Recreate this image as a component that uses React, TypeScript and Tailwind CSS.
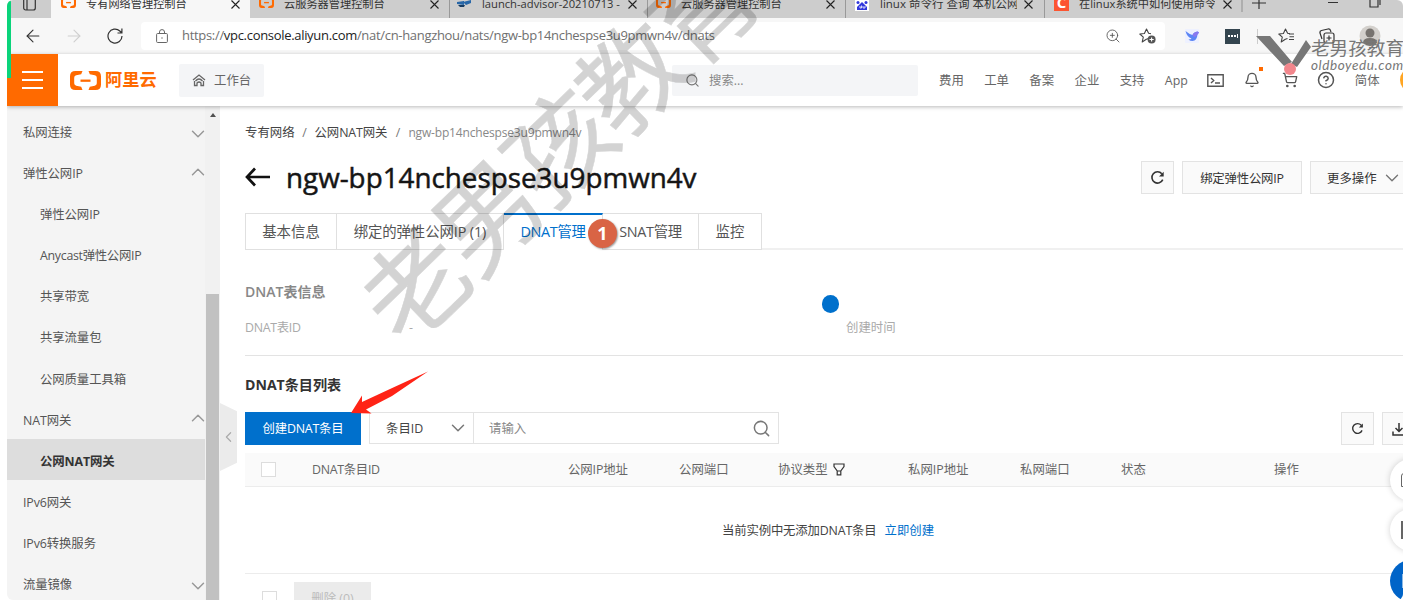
import React from "react";
import {
  ArrowLeft, ArrowRight, Bell, ChevronDown, ChevronLeft, ChevronUp, CircleHelp,
  Search, ShoppingCart, ZoomIn,
} from "lucide-react";

function AliLogo({ className }: { className: string }) {
  return (
    <svg viewBox="0 0 31 20" className={className} fill="#ff6a00" preserveAspectRatio="none">
      <path d="M12.500 0H5.500Q0 0 0 5.500V14.500Q0 20 5.500 20H12.500L11.200 16.600L6.200 15.500Q4.200 15 4.200 13V7Q4.200 5 6.200 4.500L11.200 3.400Z" />
      <path d="M18.500 0H25.500Q31 0 31 5.500V14.500Q31 20 25.500 20H18.500L19.800 16.600L24.800 15.500Q26.800 15 26.800 13V7Q26.800 5 24.800 4.500L19.800 3.400Z" />
      <rect x="10.500" y="9" width="10" height="2.400" />
    </svg>
  );
}

function Refresh({ className }: { className: string }) {
  return (
    <svg viewBox="0 0 16 16" className={className} fill="none" stroke="#333" strokeWidth="1.700">
      <path d="M13.600 10.300A6 6 0 1 1 12.600 4" />
      <path d="M14.600 1.800V6.800H9.600Z" fill="#333" stroke="none" />
    </svg>
  );
}

function Close({ className }: { className: string }) {
  return (
    <svg viewBox="0 0 9 9" className={className} stroke="#222" strokeWidth="1.100">
      <path d="M.5 .5L8.500 8.500M8.500 .5L.5 8.500" />
    </svg>
  );
}

function Tab({ icon, title, className, titleClass }: { icon: React.ReactNode; title: string; className: string; titleClass: string }) {
  return (
    <div className={`flex h-[18px] shrink-0 items-start overflow-hidden ${className}`}>
      <span className="w-[25px] shrink-0">{icon}</span>
      <span className={`-mt-[6px] h-5 shrink-0 overflow-hidden whitespace-nowrap leading-5 text-[#333] ${titleClass}`}>{title}</span>
      <Close className="-mr-px ml-auto size-[9px] shrink-0" />
    </div>
  );
}

function TabStrip() {
  return (
    <div className="flex h-[18px] shrink-0 bg-[#cdcdcd] text-[12px]">
      <div className="flex w-[44px] shrink-0 justify-center rounded-br-md">
        <svg viewBox="0 0 13 14" className="-mt-[3px] h-[14px] w-[13px]" fill="none" stroke="#333" strokeWidth="1.200">
          <rect x=".7" y=".7" width="11.600" height="12.300" rx="2" />
          <path d="M4 1V13" />
        </svg>
      </div>
      <Tab className="w-[199px] bg-[#f7f7f7] pl-[10px] pr-[11px]" titleClass="w-[120px] text-[11.2px]" title="专有网络管理控制台" icon={<AliLogo className="-mt-[3px] h-[11px] w-[15px]" />} />
      <Tab className="w-[199px] rounded-bl-md pl-[9px] pr-[11px]" titleClass="w-[120px] text-[11.2px]" title="云服务器管理控制台" icon={<AliLogo className="-mt-[3px] h-[11px] w-[15px]" />} />
      <Tab
        className="w-[198px] border-l border-[#999] pl-[7px] pr-[11px]"
        titleClass="w-[140px] text-[11.2px]"
        title="launch-advisor-20210713 -"
        icon={
          <svg viewBox="0 0 14 9" className="h-[9px] w-[14px]">
            <path d="M0 4V2L7 1V5ZM6 2L14 0V3L9 5Z" fill="#2867a8" />
            <path d="M1 5H8L7 7H3Z" fill="#163b62" />
          </svg>
        }
      />
      <Tab className="w-[198px] border-l border-[#999] pl-[8px] pr-[11px]" titleClass="w-[120px] text-[11.2px]" title="云服务器管理控制台" icon={<AliLogo className="-mt-[3px] h-[11px] w-[15px]" />} />
      <Tab
        className="w-[199px] border-l border-[#999] pl-[9px] pr-[12px]"
        titleClass="w-[137px] text-[11.5px]"
        title="linux 命令行 查询 本机公网ip"
        icon={
          <svg viewBox="0 0 14 11" className="h-[11px] w-[14px]">
            <path d="M0 0H14V11H0Z" fill="#fff" />
            <g fill="#3036dc"><circle cx="3" cy="2.500" r="1.500" /><circle cx="11" cy="2.500" r="1.500" /><path d="M7 2L12 7V10H2V7Z" /></g>
            <path d="M5 6V8H6.500V5.500M8 6V8H10V6" stroke="#fff" fill="none" strokeWidth=".8" />
          </svg>
        }
      />
      <Tab
        className="w-[197px] border-l border-[#999] pl-[9px] pr-[10px]"
        titleClass="w-[136px] text-[11.2px]"
        title="在linux系统中如何使用命令"
        icon={<span className="-mt-[6px] flex h-[17px] w-[15px] items-center justify-center bg-[#fc5531] text-[15px] font-bold leading-none text-white">C</span>}
      />
      <svg viewBox="0 0 160 18" className="h-[18px] w-[160px] shrink-0" stroke="#333" strokeWidth="1.200" fill="none">
        <path d="M11 3H25M18 -4V9M87 2.500H97M129 -2V7H137V-2M131 0V-4H139V5" />
        <path d="M1 0V12" stroke="#999" />
      </svg>
    </div>
  );
}

function StarOutline({ className, children }: { className: string; children: React.ReactNode }) {
  return (
    <svg viewBox="0 0 18 18" className={className} fill="none" stroke="#444" strokeWidth="1.100" strokeLinejoin="round">
      <path d="M9.500 11.500L7.300 12.300L3.200 15L4.300 10.200L.8 7L5.400 6.500L7.500 2L9.600 6.300L12 6.700" />
      {children}
    </svg>
  );
}

function AddressBar() {
  return (
    <div className="flex h-[37px] shrink-0 items-center border-b border-[#dcdcdc] bg-[#f7f7f7]">
      <ArrowLeft className="ml-[16px] size-[20px] shrink-0 text-[#333]" strokeWidth={1.3} />
      <ArrowRight className="ml-[21px] size-[20px] shrink-0 text-[#cfcfcf]" strokeWidth={1.3} />
      <svg viewBox="0 0 16 16" className="ml-[23px] size-[16px] shrink-0" fill="none" stroke="#333" strokeWidth="1.200">
        <path d="M15 8A7 7 0 1 1 12.800 3L14.800 5M14.900 .6V5H10.500" />
      </svg>
      <div className="ml-[18px] flex h-[28px] w-[1024px] shrink-0 items-center rounded-[4px] bg-white pl-[15px]">
        <svg viewBox="0 0 12 14" className="h-[14px] w-[12px] shrink-0" fill="none" stroke="#666">
          <rect x=".6" y="4.500" width="10.800" height="9" rx="1" />
          <path d="M3.500 4.500V3Q3.500 .6 6 .6T8.500 3V4.500" />
          <circle cx="6" cy="9" r=".7" fill="#666" stroke="none" />
        </svg>
        <span className="ml-[14px] whitespace-nowrap text-[13px] tracking-[-0.31px] text-[#707070]">
          https://<span className="text-[#222]">vpc.console.aliyun.com</span>/nat/cn-hangzhou/nats/ngw-bp14nchespse3u9pmwn4v/dnats
        </span>
        <ZoomIn className="ml-auto size-[16px] text-[#555]" strokeWidth={1.3} />
        <StarOutline className="ml-[18px] mr-[8px] size-[18px]">
          <circle cx="12.600" cy="12.500" r="4" fill="#555" stroke="none" />
          <path d="M10.500 12.500H14.700M12.600 10.400V14.600" stroke="#fff" />
        </StarOutline>
      </div>
      <svg viewBox="0 0 14 14" className="ml-[20px] size-[14px] shrink-0">
        <rect width="14" height="14" rx="1" fill="#eef1ff" />
        <path d="M.5 2Q4 5 7.500 6Q8.500 3 12.500 2.500L14 3.500L12.500 5.500Q12 11.500 7.500 12Q5 12 3.500 10.500Q6 10.500 6.500 9.500Q2 8 .5 2Z" fill="#5c86f5" />
        <path d="M7.500 6Q8.500 3 12.500 2.500L14 3.500L12.500 5.500Q11 8 9 8Z" fill="#8a79ef" />
      </svg>
      <span className="ml-[26px] flex h-[15px] w-[15px] shrink-0 items-center justify-center gap-px bg-[#34454f]">
        <i className="size-[2px] bg-white" /><i className="size-[2px] bg-white" /><i className="size-[2px] bg-white" /><i className="h-1 w-px bg-white" />
      </span>
      <span className="ml-[17px] h-[15px] w-px shrink-0 bg-[#ccc]" />
      <StarOutline className="ml-[20px] size-[18px] shrink-0"><path d="M11 7H16M11.500 9.700H16M11 12.500H16" /></StarOutline>
      <svg viewBox="0 0 16 16" className="ml-[23px] size-[16px] shrink-0" fill="none" stroke="#333" strokeWidth="1.200">
        <path d="M3 11L1 5Q.6 3 2.500 2.500L9 1Q11 .7 11.500 2.500L12 4" />
        <rect x="5" y="5" width="10" height="10" rx="2" fill="#f7f7f7" /><path d="M10 7.500V12.500M7.500 10H12.500" />
      </svg>
      <svg viewBox="0 0 22 22" className="ml-[24px] size-[22px] shrink-0">
        <circle cx="11" cy="11" r="10.500" fill="#d3d0cc" /><circle cx="11" cy="8" r="4.500" fill="#77736f" /><path d="M4 18Q4 13 11 13T18 18Q11 24 4 18Z" fill="#77736f" />
      </svg>
    </div>
  );
}

function Header() {
  return (
    <header className="z-10 -mt-px flex h-[52px] shrink-0 items-center whitespace-nowrap bg-white shadow-[0_1px_4px_rgba(0,0,0,0.28)]">
      <div className="flex h-[52px] w-[51px] shrink-0 flex-col items-center justify-center gap-[6px] bg-[#ff6a00]">
        <i className="h-[2px] w-[21px] bg-white" /><i className="h-[2px] w-[21px] bg-white" /><i className="h-[2px] w-[21px] bg-white" />
      </div>
      <AliLogo className="ml-[12px] h-[19px] w-[31px] shrink-0" />
      <span className="ml-[4px] w-[52px] shrink-0 text-[17.2px] font-bold text-[#ff6a00]">阿里云</span>
      <div className="ml-[22px] flex h-[33px] w-[85px] shrink-0 items-center rounded-[2px] bg-[#f4f5f7] pl-[13px] text-[12.4px] text-[#666]">
        <svg viewBox="0 0 14 14" className="mr-[8px] size-[14px] shrink-0" fill="none" stroke="#666" strokeWidth="1.300">
          <path d="M1 7L7 2L13 7M2.500 8V12.500H5V10Q7 8 9 10V12.500H11.500V8M3.500 8Q7 4 10.500 8" />
        </svg>
        <span className="pt-[2px]">工作台</span>
      </div>
      <div className="ml-[408px] flex h-[31px] w-[246px] shrink-0 items-center rounded-[2px] bg-[#f4f5f7] pl-[13px] text-[12.4px] text-[#888]">
        <Search className="mr-[9px] size-[15px] text-[#777]" strokeWidth={1.8} /><span className="pt-[2px]">搜索...</span>
      </div>
      <nav className="ml-[21px] flex shrink-0 items-center gap-[20.4px] pt-[2px] text-[12.4px] text-[#666]">
        <span>费用</span><span>工单</span><span>备案</span><span>企业</span><span>支持</span><span>App</span>
      </nav>
      <svg viewBox="0 0 17 13" className="ml-[19px] h-[13px] w-[17px] shrink-0" fill="none" stroke="#555" strokeWidth="1.400">
        <path d="M.8 .8H16.200V12.200H.8ZM4 4L6.700 6.500L4 9M8 9H13" />
      </svg>
      <div className="relative ml-[20px] shrink-0">
        <Bell className="size-[16px] text-[#555]" strokeWidth={2} />
        <i className="absolute -right-[3px] -top-[5px] size-[4px] bg-[#ff6a00]" />
      </div>
      <ShoppingCart className="ml-[22px] size-[16px] shrink-0 text-[#555]" strokeWidth={2} />
      <CircleHelp className="ml-[19px] size-[18px] shrink-0 text-[#555]" strokeWidth={2} />
      <span className="ml-[20px] shrink-0 pt-[2px] text-[12.4px] text-[#666]">简体</span>
      <i className="ml-[20px] size-[26px] shrink-0 rounded-full bg-[#ffa522]" />
    </header>
  );
}

const menu: { label: string; sub?: boolean; arrow?: "up" | "down"; active?: boolean }[] = [
  { label: "私网连接", arrow: "down" },
  { label: "弹性公网IP", arrow: "up" },
  { label: "弹性公网IP", sub: true },
  { label: "Anycast弹性公网IP", sub: true },
  { label: "共享带宽", sub: true },
  { label: "共享流量包", sub: true },
  { label: "公网质量工具箱", sub: true },
  { label: "NAT网关", arrow: "up" },
  { label: "公网NAT网关", sub: true, active: true },
  { label: "IPv6网关" },
  { label: "IPv6转换服务" },
  { label: "流量镜像", arrow: "down" },
];

function Sidebar() {
  return (
    <aside className="flex h-[494px] w-[213px] shrink-0 bg-[#f4f4f4]">
      <ul className="w-[198px] pt-[4px]">
        {menu.map((m, i) => (
          <li
            key={i}
            className={`flex h-[41.1px] items-center text-[12.4px] ${m.label.startsWith("Anycast") ? "tracking-[-0.3px]" : "tracking-[-0.1px]"} ${m.sub ? "pl-[33px]" : "pl-[16px]"} ${m.active ? "bg-[#ddd] font-bold text-[#333]" : "text-[#555]"}`}
          >
            <span className="pt-[5.500px]">{m.label}</span>
            {m.arrow === "up" && <ChevronUp className="-mr-[4px] ml-auto size-[22px] text-[#999]" strokeWidth={1.6} />}
            {m.arrow === "down" && <ChevronDown className="-mr-[4px] ml-auto mt-[6px] size-[22px] text-[#999]" strokeWidth={1.6} />}
          </li>
        ))}
      </ul>
      <div className="flex w-[15px] flex-col items-center bg-[#f1f1f1] pt-[7px]">
        <i className="h-0 w-0 border-x-[3.5px] border-b-4 border-x-transparent border-b-[#505050]" />
        <i className="mt-[177px] w-[13px] grow bg-[#c1c1c1]" />
      </div>
    </aside>
  );
}

const boxBtn = "flex shrink-0 items-center border border-[#e3e3e3] bg-[#fafafa] text-[#333]";

function Main() {
  return (
    <main className="flex w-[1166px] shrink-0 flex-col whitespace-nowrap [&>*]:shrink-0">
      <div className="mt-[17px] flex h-[20px] items-center text-[12.4px] text-[#444]">
        <span>专有网络</span><span className="w-[20px] text-center text-[#777]">/</span><span className="tracking-[-0.1px]">公网NAT网关</span>
        <span className="w-[21px] text-center text-[#777]">/</span><span className="text-[12px] tracking-[-0.17px] text-[#888]">ngw-bp14nchespse3u9pmwn4v</span>
      </div>
      <div className="mt-[18px] flex h-[33px] items-center">
        <svg viewBox="0 0 26 20" className="-mt-px h-[20px] w-[26px] shrink-0" fill="none" stroke="#111" strokeWidth="2.700">
          <path d="M10 1.500L2 10L10 18.500M2 10H25" />
        </svg>
        <h1 className="ml-[15px] text-[27.8px] font-medium text-[#151515] [-webkit-text-stroke:0.5px_#151515]">ngw-bp14nchespse3u9pmwn4v</h1>
        <div className={`${boxBtn} ml-auto h-[33px] w-[33px] justify-center`}><Refresh className="size-[15px]" /></div>
        <div className={`${boxBtn} ml-[8px] h-[33px] w-[120px] justify-center pt-[3px] text-[12.4px] tracking-[-0.2px]`}>绑定弹性公网IP</div>
        <div className={`${boxBtn} ml-[8px] h-[33px] w-[101px] pl-[16px] text-[12.4px]`}><span className="pt-[3px]">更多操作</span><ChevronDown className="ml-[4px] size-[22px] text-[#777]" strokeWidth={1.5} /></div>
      </div>
      <div className="mt-[19px] flex h-[37px] items-end">
        <div className="flex h-[37px] shrink-0 items-stretch border border-[#e0e0e0] text-[14.4px] text-[#555]">
          <span className="flex w-[91px] items-center justify-center border-r border-[#e0e0e0]">基本信息</span>
          <span className="flex w-[167px] items-center justify-center border-r border-[#e0e0e0] tracking-[-0.1px]">绑定的弹性公网IP (1)</span>
          <span className="-my-px flex w-[99px] items-center justify-center border-r border-t-2 border-r-[#e0e0e0] border-t-[#0070cc] bg-white pb-[2px] tracking-[-0.35px] text-[#0070cc]">DNAT管理</span>
          <span className="flex w-[96px] items-center justify-center border-r border-[#e0e0e0] tracking-[-0.3px]">SNAT管理</span>
          <span className="flex w-[62px] items-center justify-center">监控</span>
        </div>
        <div className="h-[2px] grow bg-[#f0f0f0]" />
      </div>
      <h2 className="mt-[32px] h-[20px] text-[14px] font-semibold leading-5 text-[#888]">DNAT表信息</h2>
      <div className="mt-[16px] flex h-[20px] text-[12.4px] leading-5 text-[#aaa]">
        <span className="w-[164px] tracking-[-0.3px]">DNAT表ID</span><span className="w-[437px]">-</span><span>创建时间</span>
      </div>
      <div className="mt-[17px] border-t border-[#e3e3e3]" />
      <h2 className="mt-[19px] h-[20px] text-[14.1px] font-bold leading-5 text-[#333]">DNAT条目列表</h2>
      <div className="mt-[17px] flex h-[33px] w-[1170px] text-[12.4px]">
        <button className="w-[116px] bg-[#0070cc] pt-[2px] tracking-[-0.2px] text-white">创建DNAT条目</button>
        <div className="ml-[8px] flex h-[32px] w-[105px] items-center border border-[#e3e3e3] pl-[16px] text-[#444]"><span className="pt-[3px]">条目ID</span><ChevronDown className="ml-auto mr-[4px] size-[22px] text-[#777]" strokeWidth={1.6} /></div>
        <div className="-ml-px flex h-[32px] w-[306px] items-center border border-[#e3e3e3] pl-[15px] text-[#888]"><span className="pt-[3px]">请输入</span><Search className="ml-auto mr-[7px] size-[19px] text-[#777]" strokeWidth={1.9} /></div>
        <div className={`${boxBtn} ml-auto w-[33px] justify-center`}><Refresh className="size-[13px]" /></div>
        <div className={`${boxBtn} ml-[8px] w-[33px] justify-center`}>
          <svg viewBox="0 0 14 14" className="size-[14px]" fill="none" stroke="#333" strokeWidth="1.500"><path d="M7 1V9M3.500 6L7 9.500L10.500 6M1 9.500V13H13V9.500" /></svg>
        </div>
      </div>
      <div className="mt-[8px] grid h-[34px] grid-cols-[67px_256px_111px_99px_130px_112px_101px_153px_1fr] items-center border-b border-[#ececec] bg-[#fafafa] text-[12.4px] text-[#666] [&>span]:pt-px">
        <i className="ml-[16px] size-[15px] border border-[#ddd] bg-white" />
        <span className="tracking-[-0.3px]">DNAT条目ID</span><span className="tracking-[-0.1px]">公网IP地址</span><span>公网端口</span>
        <span className="flex items-center">协议类型
          <svg viewBox="0 0 12 13" className="ml-[5px] h-[13px] w-[12px]" fill="none" stroke="#333" strokeWidth="1.200"><path d="M1 1H11V3.500L7.800 8V11.800H4.200V8L1 3.500ZM4 8H8" /></svg>
        </span>
        <span>私网IP地址</span><span>私网端口</span><span>状态</span><span>操作</span>
      </div>
      <div className="flex h-[87px] items-center border-b border-[#ececec] pl-[477px] pt-[2px] text-[12.4px] text-[#444]">
        <span className="tracking-[-0.17px]">当前实例中无添加DNAT条目</span><a className="ml-[8px] text-[#0070cc]">立即创建</a>
      </div>
      <div className="mt-[8px] flex h-[33px] items-center">
        <i className="ml-[17px] size-[15px] border border-[#ddd] bg-white" />
        <span className="ml-[17px] flex h-[33px] w-[77px] items-center justify-center bg-[#ebebeb] pt-[2px] text-[12.4px] text-[#bbb]">删除 (0)</span>
      </div>
    </main>
  );
}

function Overlays() {
  return (
    <>
      <i className="absolute left-0 top-0 z-20 h-[78px] w-[4px] rounded-t bg-[#0ad47b]" />
      <i className="absolute left-[814.5px] top-[295px] h-[18px] w-[17px] rounded-full bg-[#0070cc]" />
      <span className="absolute left-[581px] top-[219px] flex size-[29px] items-center justify-center rounded-full bg-[#d96445] text-[18px] font-bold text-white shadow-[1px_1px_2px_rgba(0,0,0,0.4)]">1</span>
      <svg viewBox="0 0 80 46" className="absolute left-[342px] top-[371px] h-[46px] w-[80px]">
        <path d="M79 .5L41 18L13 31L13 24.500L2 42L22.500 42.500L17 38.500L43 25Z" fill="#ff2316" />
      </svg>
      <div className="absolute left-[1383px] top-[459px] size-[42px] rounded-full bg-white shadow-[0_0_6px_rgba(0,0,0,0.18)]"><i className="absolute left-[11px] top-[14px] h-[14px] w-[14px] rounded-tl-[3px] border-[1.5px] border-[#666]" /></div>
      <div className="absolute left-[1383px] top-[509px] size-[42px] rounded-full bg-white shadow-[0_0_6px_rgba(0,0,0,0.18)]"><i className="absolute left-[11px] top-[12px] h-[18px] w-[14px] border-2 border-[#666]" /></div>
      <div className="absolute left-[1383px] top-[560px] size-[42px] rounded-full bg-[#0064c8]"><i className="absolute left-[12px] top-[14px] h-[14px] w-[14px] border border-[#8cb9e5]" /></div>
      <div className="pointer-events-none absolute left-[250px] top-[83px] z-30 flex w-[600px] -rotate-44 justify-center whitespace-nowrap text-[105px] leading-[130px] tracking-[-5px] text-black opacity-17 [-webkit-text-stroke:0.5px_#000]">老男孩教育</div>
      <svg viewBox="0 0 56 40" className="absolute left-[1249px] top-[36px] z-30 h-[40px] w-[56px]">
        <path d="M0 0H14L36 26L28 30ZM35 28L50 4L55 11L41 31Z" fill="#777" />
        <circle cx="34" cy="33" r="6" fill="#f2868c" />
      </svg>
      <div className="absolute left-[1304px] top-[37px] z-30 flex flex-col whitespace-nowrap text-[#777]">
        <span className="text-[18.600px] leading-[21px]">老男孩教育</span>
        <span className="font-['Lato',sans-serif] text-[13.500px] italic leading-[14px] tracking-[0.6px]">oldboyedu.com</span>
      </div>
    </>
  );
}

export default function App() {
  return (
    <div className="h-[615px] w-[1407px] overflow-hidden bg-white pl-[7px] font-['Open_Sans','Noto_Sans_CJK_SC',sans-serif]">
      <div className="relative flex h-[600px] w-[1396px] flex-col overflow-hidden rounded-md bg-white">
        <TabStrip />
        <AddressBar />
        <Header />
        <div className="flex h-[494px] overflow-hidden">
          <Sidebar />
          <div className="flex w-[25px] shrink-0 flex-col">
            <div className="mt-[297px] flex h-[68px] w-[17px] items-center bg-[#ebebeb] [clip-path:polygon(0_0,100%_12%,100%_88%,0_100%)]">
              <ChevronLeft className="size-[18px] text-[#aaa]" strokeWidth={1.7} />
            </div>
          </div>
          <Main />
        </div>
        <Overlays />
      </div>
    </div>
  );
}
